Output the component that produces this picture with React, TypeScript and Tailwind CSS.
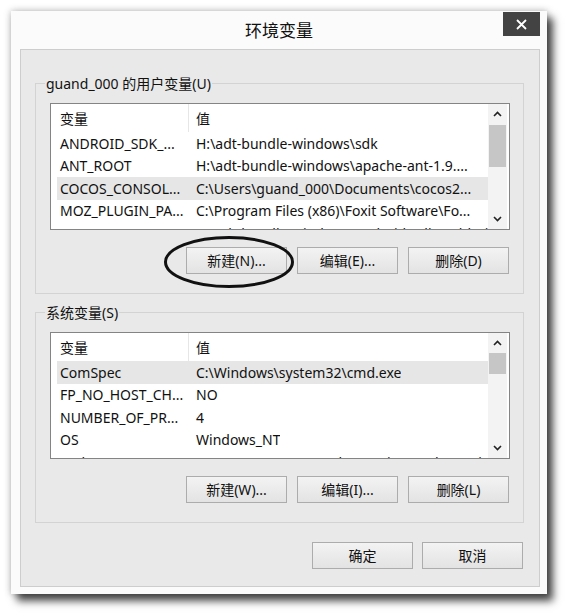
import React from "react";

type Row = { name: string; value: string; selected?: boolean };

function Chevron({ up }: { up?: boolean }) {
  return (
    <svg width="9" height="6" viewBox="0 0 9 6" className="block">
      <path
        d={up ? "M1 5 L4.5 1.5 L8 5" : "M1 1 L4.5 4.5 L8 1"}
        fill="none"
        stroke="#222"
        strokeWidth="1.6"
      />
    </svg>
  );
}

function ListBox({ rows, thumbClass }: { rows: Row[]; thumbClass: string }) {
  return (
    <div className="flex h-[127px] w-[460px] border border-[#848484] bg-white overflow-hidden">
      <div className="min-w-0 flex-1 overflow-hidden">
        <div className="flex h-[28px] items-center">
          <div className="flex h-full w-[138px] items-center border-r border-[#e6e6e6] pl-[9px]">变量</div>
          <div className="pl-[7px]">值</div>
        </div>
        {rows.map((r, i) => (
          <div
            key={i}
            className={
              "ml-[6px] flex h-[22.5px] items-center whitespace-nowrap " +
              (r.selected ? "bg-[#e6e6e6]" : "")
            }
          >
            <div className="w-[131px] shrink-0 overflow-hidden pl-[3px]">{r.name}</div>
            <div className="min-w-0 overflow-hidden pl-[8px]">{r.value}</div>
          </div>
        ))}
      </div>
      <div className="mr-[2px] flex w-[19px] shrink-0 flex-col bg-[#f3f3f3]">
        <div className="flex h-[20px] items-center justify-center">
          <Chevron up />
        </div>
        <div className="flex-1">
          <div className={"mx-[1px] bg-[#c6c6c6] " + thumbClass} />
        </div>
        <div className="flex h-[20px] items-center justify-center">
          <Chevron />
        </div>
      </div>
    </div>
  );
}

function Btn({ children }: { children: React.ReactNode }) {
  return (
    <button className="flex h-[27px] w-[101px] items-center justify-center border border-[#acacac] bg-gradient-to-b from-[#f3f3f3] to-[#e3e3e3] text-[14px] text-[#111]">
      {children}
    </button>
  );
}

function Group({
  label,
  rows,
  thumbClass,
  buttons,
  extra,
}: {
  label: string;
  rows: Row[];
  thumbClass: string;
  buttons: string[];
  extra: string;
}) {
  return (
    <fieldset className={"ml-[14px] w-[489px] min-w-0 border border-[#d3d3d3] " + extra}>
      <legend className="ml-[9px] px-[1px] text-[14px] leading-[21px] text-[#111]">{label}</legend>
      <div className="pl-[14px] pr-[13px] pb-[19px] pt-[9px]">
        <ListBox rows={rows} thumbClass={thumbClass} />
        <div className="mt-[17px] flex justify-end gap-[10px] pr-[1px]">
          {buttons.map((b) => (
            <Btn key={b}>{b}</Btn>
          ))}
        </div>
      </div>
    </fieldset>
  );
}

export default function App() {
  const userRows: Row[] = [
    { name: "ANDROID_SDK_...", value: "H:\\adt-bundle-windows\\sdk" },
    { name: "ANT_ROOT", value: "H:\\adt-bundle-windows\\apache-ant-1.9...." },
    { name: "COCOS_CONSOL...", value: "C:\\Users\\guand_000\\Documents\\cocos2...", selected: true },
    { name: "MOZ_PLUGIN_PA...", value: "C:\\Program Files (x86)\\Foxit Software\\Fo..." },
    { name: "NDK_ROOT", value: "H:\\adt-bundle-windows\\android-ndk-r9d\\build" },
  ];
  const sysRows: Row[] = [
    { name: "ComSpec", value: "C:\\Windows\\system32\\cmd.exe", selected: true },
    { name: "FP_NO_HOST_CH...", value: "NO" },
    { name: "NUMBER_OF_PR...", value: "4" },
    { name: "OS", value: "Windows_NT" },
    { name: "Path", value: "C:\\ProgramData\\Oracle\\Java\\javapath;C:\\Wi..." },
  ];

  return (
    <div className="relative h-[615px] w-[566px] overflow-hidden bg-white pl-[11px] pt-[11px] font-['Noto_Sans','Noto_Sans_CJK_SC',sans-serif] text-[14px] text-[#111]">
      <div className="flex h-[583px] w-[536px] flex-col bg-[#fbfbfb] shadow-[0_0_7px_rgba(0,0,0,0.3),6px_7px_8px_rgba(0,0,0,0.7)]">
        <div className="grid h-[38px] grid-cols-[1fr_auto_1fr]">
          <div />
          <div className="self-center text-[17px] leading-none text-[#111]">环境变量</div>
          <div className="flex items-start justify-end pr-[7px] pt-[1px]">
            <div className="flex h-[24px] w-[37px] items-center justify-center bg-[#434343]">
              <svg width="11" height="11" viewBox="0 0 11 11">
                <path d="M1 1 L10 10 M10 1 L1 10" stroke="#fff" strokeWidth="1.8" />
              </svg>
            </div>
          </div>
        </div>
        <div className="ml-[9px] flex h-[538px] w-[520px] flex-col border border-[#cdcdcd] bg-[#e9e9e9]">
          <Group
            label="guand_000 的用户变量(U)"
            rows={userRows}
            thumbClass="mt-[1px] h-[42px]"
            buttons={["新建(N)...", "编辑(E)...", "删除(D)"]}
            extra="mt-[23px]"
          />
          <Group
            label="系统变量(S)"
            rows={sysRows}
            thumbClass="mt-0 h-[21px]"
            buttons={["新建(W)...", "编辑(I)...", "删除(L)"]}
            extra="mt-[8px]"
          />
          <div className="mt-[19px] flex justify-end gap-[9px] pr-[16px]">
            <Btn>确定</Btn>
            <Btn>取消</Btn>
          </div>
        </div>
      </div>
      <svg
        className="pointer-events-none absolute left-[163px] top-[235px]"
        width="132"
        height="54"
        viewBox="0 0 132 54"
      >
        <ellipse cx="66" cy="27" rx="63.5" ry="24.5" fill="none" stroke="#111" strokeWidth="3" />
      </svg>
    </div>
  );
}
